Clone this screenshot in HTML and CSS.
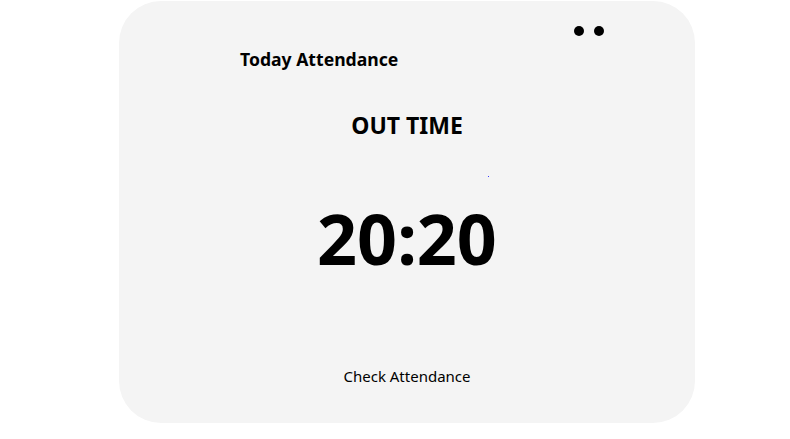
FILE: index.html
```html
<!DOCTYPE html>
<html lang="en">
<head>
<meta charset="utf-8">
<title>Today Attendance</title>
<link rel="stylesheet" href="styles.css">
</head>
<body>
  <div class="card">
    <div class="menu">
      <span class="dot"></span>
      <span class="dot"></span>
    </div>
    <h2 class="title">Today Attendance</h2>
    <h1 class="label">OUT TIME</h1>
    <span class="marker"></span>
    <div class="clock">20:20</div>
    <div class="check">Check Attendance</div>
  </div>
</body>
</html>
```
FILE: styles.css
```css
html, body {
  margin: 0;
  padding: 0;
  background: #ffffff;
}
body {
  font-family: "Noto Sans", "Open Sans", "DejaVu Sans", sans-serif;
  color: #000;
}
.card {
  position: relative;
  box-sizing: border-box;
  width: 576px;
  height: 422px;
  margin: 1px 0 0 119px;
  background: #f4f4f4;
  border-radius: 42px;
  display: flex;
  flex-direction: column;
  align-items: center;
}
.menu {
  align-self: stretch;
  display: flex;
  justify-content: flex-end;
  gap: 10px;
  padding: 25px 91px 0 0;
}
.dot {
  width: 10px;
  height: 10px;
  border-radius: 50%;
  background: #000;
}
.title {
  align-self: flex-start;
  margin: 11px 0 0 121px;
  font-size: 17.6px;
  font-weight: 700;
  line-height: 24px;
}
.label {
  margin: 39px 0 0 0;
  font-size: 23px;
  font-weight: 700;
  line-height: 30px;
}
.marker {
  position: absolute;
  left: 369px;
  top: 175px;
  width: 1px;
  height: 1px;
  background: #3b3bff;
}
.clock {
  margin-top: 58px;
  font-size: 70px;
  font-weight: 700;
  line-height: 80px;
}
.check {
  margin-top: auto;
  margin-bottom: 37px;
  font-size: 15px;
  line-height: 20px;
}
```
